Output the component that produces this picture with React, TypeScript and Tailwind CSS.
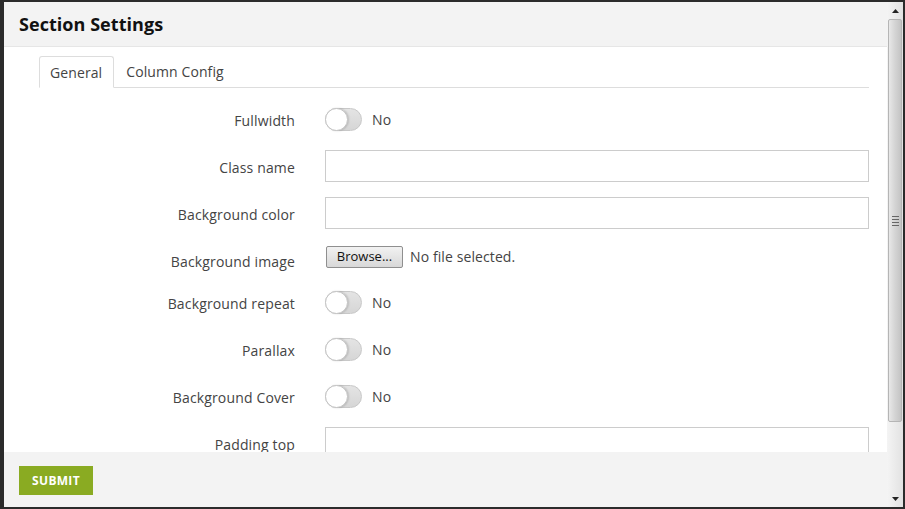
import React from "react";

const font = { fontFamily: "'Open Sans', 'Liberation Sans', sans-serif" };

function Toggle() {
  return (
    <div className="flex items-center h-[32px]">
      <div className="relative w-[37px] h-[23px] rounded-full border border-[#c8c8c8] bg-gradient-to-b from-[#e4e4e4] to-[#d6d6d6]">
        <div className="absolute left-[-1px] top-[-1px] w-[23px] h-[23px] rounded-full border border-[#c4c4c4] bg-white shadow-[1px_0_2px_rgba(0,0,0,0.15)]" />
      </div>
      <span className="ml-[10px] text-[14px] text-[#444] tracking-[0.1px]">No</span>
    </div>
  );
}

function Row({ label, children }: { label: string; children: React.ReactNode }) {
  return (
    <div className="flex mb-[15px]">
      <div className="w-[256px] text-right text-[14px] leading-[20px] pt-[8px] text-[#444] tracking-[0.15px]">{label}</div>
      <div className="ml-[30px] flex-1">{children}</div>
    </div>
  );
}

function TextInput() {
  return <div className="h-[32px] border border-[#cccccc] bg-white" />;
}

export default function App() {
  return (
    <div className="w-[905px] h-[509px] bg-[#2b2b2b] pt-[2px] pl-[4px] pr-[2px] pb-[2px] overflow-hidden" style={font}>
      <div className="flex h-[505px]">
        <div className="flex-1 flex flex-col bg-white">
          <div className="h-[44px] bg-[#f3f3f3] border-b border-[#e6e6e6] box-content flex items-center pl-[15px]">
            <span className="text-[18px] font-bold text-[#111] tracking-[0.05px]">Section Settings</span>
          </div>
          <div className="h-[405px] overflow-hidden pt-[9px] pl-[35px] pr-[18px]">
            <div className="flex border-b border-[#dddddd] h-[32px]">
              <div className="h-[32px] pl-[10px] pr-[11px] border border-[#dddddd] border-b-white rounded-t-[3px] bg-white flex items-center text-[14px] text-[#444] tracking-[0.1px] -mb-px">
                General
              </div>
              <div className="h-[31px] px-[12px] flex items-center text-[14px] text-[#444] tracking-[0.1px]">Column Config</div>
            </div>
            <div className="mt-[15px]">
              <Row label="Fullwidth"><Toggle /></Row>
              <Row label="Class name"><TextInput /></Row>
              <Row label="Background color"><TextInput /></Row>
              <div className="flex mb-[15px] h-[27px]">
                <div className="w-[256px] text-right text-[14px] leading-[20px] pt-[8px] text-[#444] tracking-[0.15px]">Background image</div>
                <div className="ml-[30px] flex-1 flex items-start pt-[2px]">
                  <div className="ml-[1px] h-[22px] w-[77px] rounded-[2px] border border-[#8f8f8f] bg-gradient-to-b from-[#f2f2f2] to-[#d8d8d8] flex items-center justify-center text-[13px] text-[#111]">
                    Browse...
                  </div>
                  <span className="ml-[7px] text-[14px] leading-[22px] text-[#444] tracking-[0.1px]">No file selected.</span>
                </div>
              </div>
              <Row label="Background repeat"><Toggle /></Row>
              <Row label="Parallax"><Toggle /></Row>
              <Row label="Background Cover"><Toggle /></Row>
              <Row label="Padding top"><TextInput /></Row>
            </div>
          </div>
          <div className="h-[55px] bg-[#f3f3f3] pl-[15px] pt-[14px]">
            <div className="w-[74px] h-[29px] bg-[#8aab22] flex items-center justify-center text-white text-[12px] font-bold tracking-[0.3px]">
              SUBMIT
            </div>
          </div>
        </div>
        <div className="w-[16px] h-[505px] flex flex-col bg-gradient-to-r from-[#f4f4f4] to-[#e2e2e2]">
          <div className="h-[17px] flex items-center justify-center">
            <svg width="7" height="4" viewBox="0 0 7 4"><path d="M0 4 L3.5 0 L7 4 Z" fill="#222" /></svg>
          </div>
          <div className="h-[403px] mx-[1px] rounded-[2px] border border-[#b5b5b5] bg-gradient-to-r from-[#e8e8e8] via-[#d4d4d4] to-[#c4c4c4] flex items-center justify-center">
            <div className="flex flex-col gap-[2px]">
              <div className="w-[7px] h-px bg-[#666]" />
              <div className="w-[7px] h-px bg-[#666]" />
              <div className="w-[7px] h-px bg-[#666]" />
              <div className="w-[7px] h-px bg-[#666]" />
            </div>
          </div>
          <div className="flex-1" />
          <div className="h-[17px] flex items-center justify-center">
            <svg width="7" height="4" viewBox="0 0 7 4"><path d="M0 0 L3.5 4 L7 0 Z" fill="#222" /></svg>
          </div>
        </div>
      </div>
    </div>
  );
}
